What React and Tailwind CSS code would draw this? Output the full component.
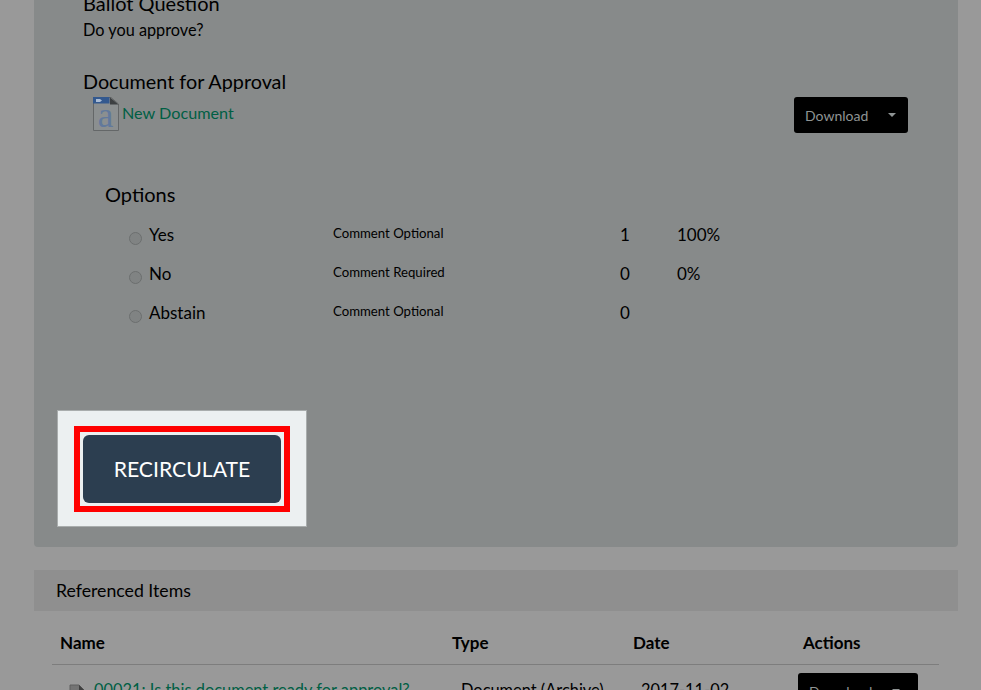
import React from 'react'

const options = [
  { label: 'Yes', note: 'Comment Optional', count: '1', pct: '100%' },
  { label: 'No', note: 'Comment Required', count: '0', pct: '0%' },
  { label: 'Abstain', note: 'Comment Optional', count: '0', pct: '' },
]

const DocIcon = () => (
  <svg width="28" height="36" viewBox="0 0 28 36" className="shrink-0 overflow-visible">
    <path d="M1.500 1.500H19L26.500 8V34.500H1.500Z" fill="#8b8f90" stroke="#646768" />
    <path d="M1 1H17.500V7.500H1Z" fill="#33598f" />
    <path d="M4 3h4l2 1.500-2 1.500H4Z" fill="#a9bbd4" />
    <path d="M18 1.500l8.500 7H18Z" fill="#3d4042" />
    <text x="13.500" y="31" textAnchor="middle" fontFamily="'Liberation Serif', serif" fontSize="35" fill="#62799c">a</text>
  </svg>
)

const DownloadButton = ({ className }) => (
  <div className={`flex items-center bg-black rounded-[3px] text-[#8f9494] text-[14px] ${className}`}>
    <span>Download</span>
    <span className="ml-[20px] w-0 h-0 border-x-[4px] border-x-transparent border-t-[4px] border-t-[#8f9494]" />
  </div>
)

const App = () => {
  return (
    <div className="h-[690px] w-[981px] overflow-hidden bg-[#999999] text-black font-['Lato','Open_Sans',sans-serif]">
      <div className="ml-[34px] mr-[23px] -mt-[12px] h-[559px] bg-[#878a8a] rounded-b-[4px] pl-[49px] pr-[50px] flex flex-col">
        <h3 className="text-[20px] leading-[26px] mt-[2px]">Ballot Question</h3>
        <p className="text-[16.300px] leading-[22px] mt-[3px]">Do you approve?</p>

        <h3 className="text-[19.800px] leading-[28px] mt-[26px]">Document for Approval</h3>
        <div className="flex items-start justify-between">
          <div className="flex items-start ml-[9px] mt-[1px]">
            <DocIcon />
            <a className="text-[16.200px] leading-[24px] text-[#005f44] ml-[2px] mt-[5px]">New Document</a>
          </div>
          <DownloadButton className="w-[114px] h-[36px] pl-[11px] mt-[2px]" />
        </div>

        <h3 className="text-[20px] leading-[28px] mt-[47px] ml-[22px]">Options</h3>
        <div className="ml-[46px] mt-[15px] flex flex-col gap-[15px]">
          {options.map((o) => (
            <div key={o.label} className="flex items-start h-[24px]">
              <span className="w-[13px] h-[13px] rounded-full bg-[#808383] border border-[#6c6f6f] mt-[9px]" />
              <span className="w-[184px] ml-[7px] text-[17px] leading-[24px]">{o.label}</span>
              <span className="w-[287px] text-[13.200px] leading-[20px]">{o.note}</span>
              <span className="w-[57px] text-[17px] leading-[24px]">{o.count}</span>
              <span className="text-[17px] leading-[24px]">{o.pct}</span>
            </div>
          ))}
        </div>

        <div className="-ml-[26px] mt-[85px] w-[250px] h-[117px] bg-[#ecf0f1] border border-[#a9adad] flex justify-center pt-[15px]">
          <div className="w-[216px] h-[86px] border-[6px] border-[#ff0000] p-[3px]">
            <div className="h-full rounded-[6px] bg-[#2c3e50] text-white text-[21.200px] pt-[1px] flex items-center justify-center">
              RECIRCULATE
            </div>
          </div>
        </div>
      </div>

      <div className="ml-[34px] mr-[23px] mt-[23px] h-[41px] bg-[#8f8f8f] px-[22px] pt-[2px] flex items-center text-[17.700px]">
        Referenced Items
      </div>

      <div className="ml-[52px] mr-[42px] mt-[13px]">
        <div className="flex items-center h-[41px] pb-[2px] border-b border-[#7d7d7d] text-[17px] font-bold">
          <span className="w-[400px] pl-[8px]">Name</span>
          <span className="w-[181px]">Type</span>
          <span className="w-[170px]">Date</span>
          <span>Actions</span>
        </div>
        <div className="flex items-start mt-[8px] text-[16.400px]">
          <div className="w-[400px] pl-[17px] flex items-start pt-[5px]">
            <svg width="16" height="20" viewBox="0 0 16 20" className="shrink-0 mt-[6px]">
              <path d="M1 1H10L15 6V19H1Z" fill="#747474" stroke="#5f5f5f" />
              <path d="M10 1L15 6H10Z" fill="#3f3f3f" />
            </svg>
            <a className="ml-[9px] text-[#005f44] whitespace-nowrap">00021: Is this document ready for approval?</a>
          </div>
          <span className="w-[181px] pl-[9px] pt-[5px]">Document (Archive)</span>
          <span className="w-[165px] pl-[8px] pt-[5px]">2017-11-02</span>
          <DownloadButton className="w-[120px] h-[36px] pl-[11px]" />
        </div>
      </div>
    </div>
  )
}

export default App
